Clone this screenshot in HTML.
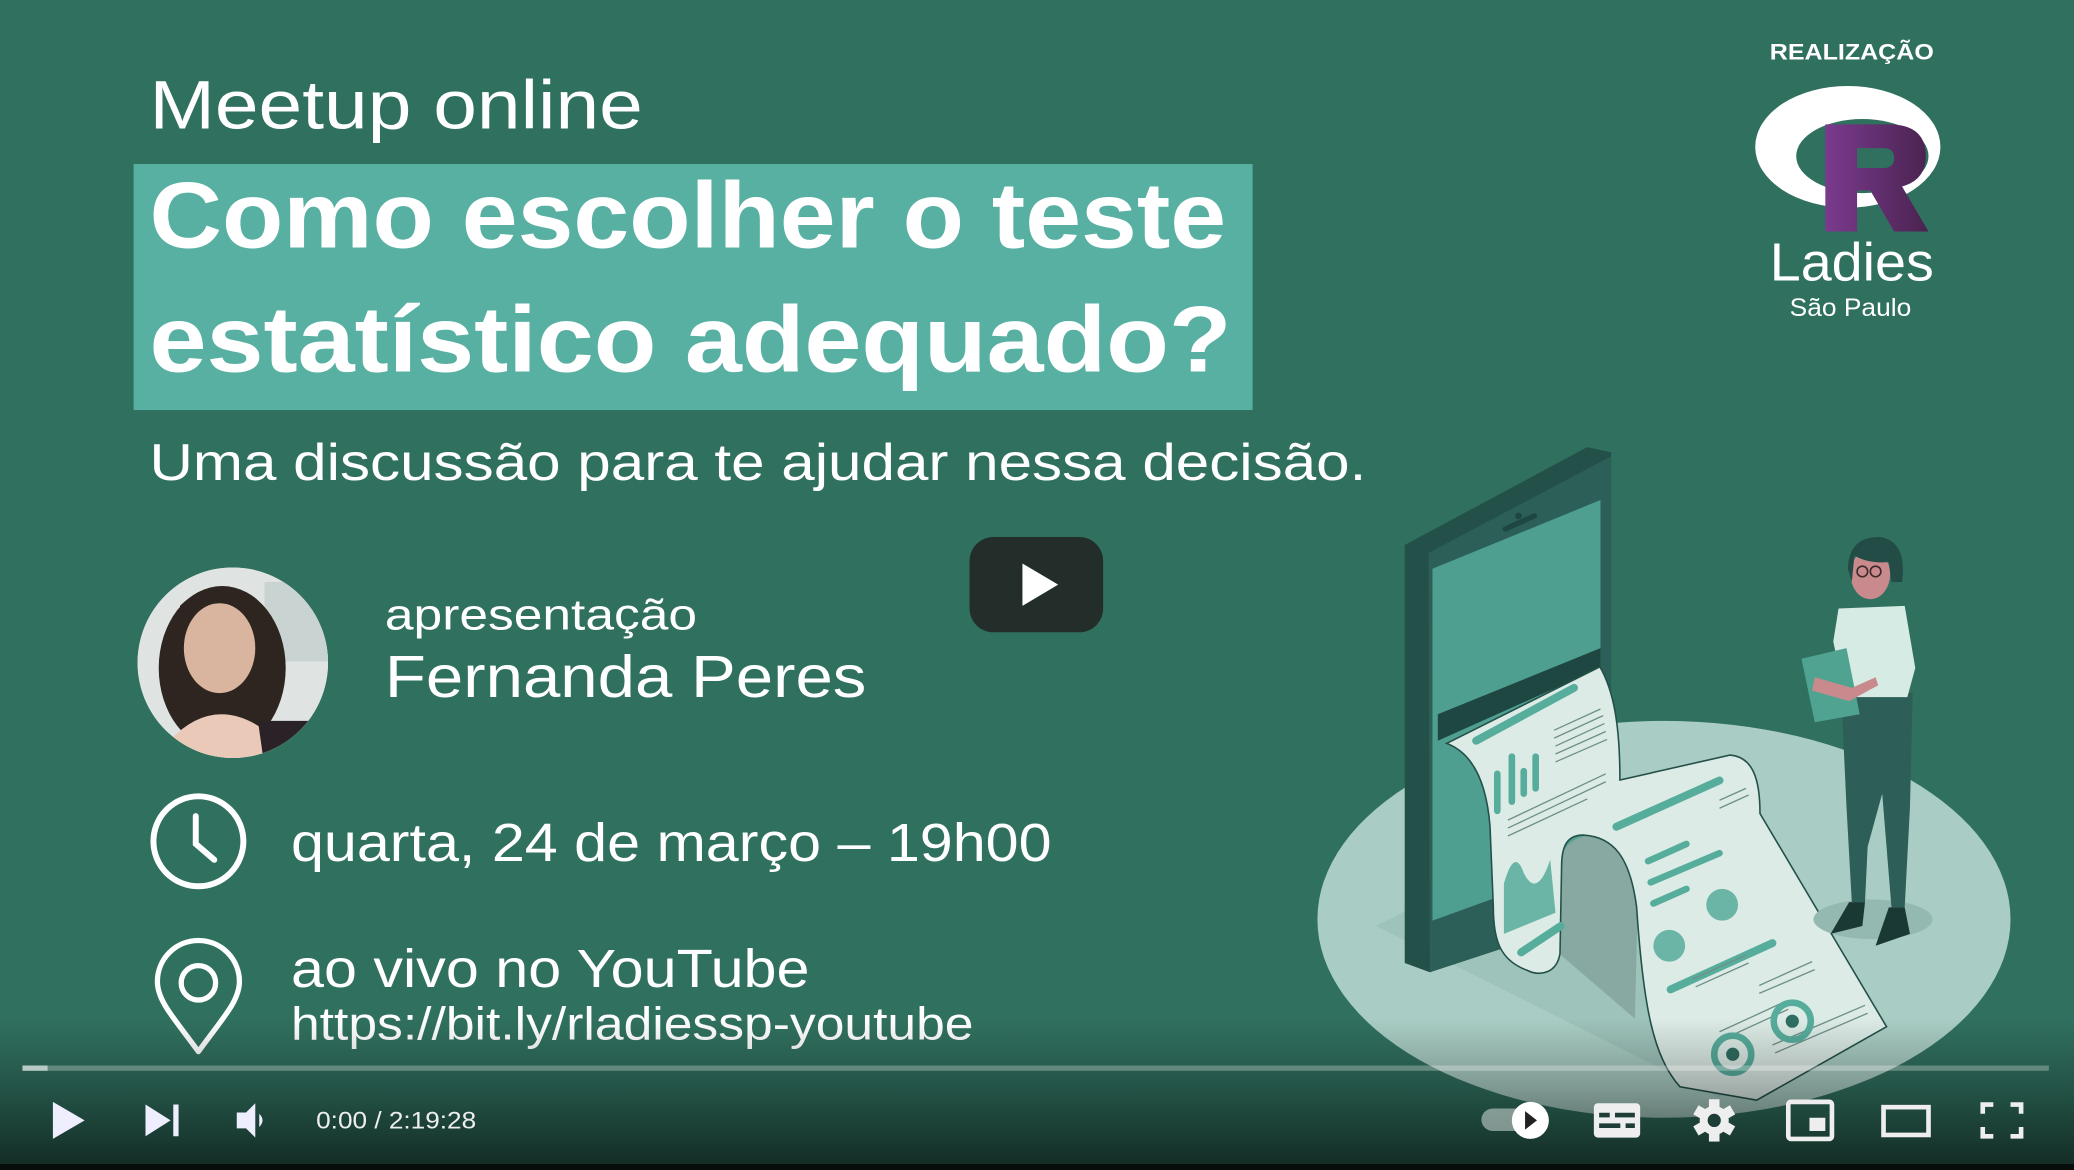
<!DOCTYPE html>
<html><head><meta charset="utf-8"><style>
html,body{margin:0;padding:0;width:2074px;height:1170px;overflow:hidden;background:#30705f}
svg{display:block}
text{font-family:"Liberation Sans",sans-serif;fill:#fff}
</style></head><body>
<svg width="2074" height="1170" viewBox="0 0 1568 884.5" preserveAspectRatio="none" xmlns="http://www.w3.org/2000/svg">
<defs>
<linearGradient id="bot" x1="0" y1="0" x2="0" y2="1">
<stop offset="0" stop-color="#000" stop-opacity="0"/>
<stop offset="0.45" stop-color="#000" stop-opacity="0.25"/>
<stop offset="1" stop-color="#000" stop-opacity="0.62"/>
</linearGradient>
<linearGradient id="rg" x1="0" y1="0" x2="1" y2="0">
<stop offset="0" stop-color="#7a3a8e"/><stop offset="1" stop-color="#4a2350"/>
</linearGradient>
<clipPath id="pc"><circle cx="176" cy="501" r="72"/></clipPath>
</defs>
<rect width="1568" height="884.5" fill="#30705f"/>

<!-- Titles -->
<text x="113" y="97" font-size="52" textLength="373" lengthAdjust="spacingAndGlyphs">Meetup online</text>
<rect x="101" y="124" width="846" height="186" fill="#57b0a1"/>
<text x="113" y="187" font-size="71" font-weight="bold" textLength="814" lengthAdjust="spacingAndGlyphs">Como escolher o teste</text>
<text x="113" y="281" font-size="71" font-weight="bold" textLength="818" lengthAdjust="spacingAndGlyphs">estatístico adequado?</text>
<text x="113" y="363" font-size="39" textLength="920" lengthAdjust="spacingAndGlyphs">Uma discussão para te ajudar nessa decisão.</text>

<!-- Photo -->
<circle cx="176" cy="501" r="72" fill="#e4e8e6"/>
<g clip-path="url(#pc)">
<rect x="104" y="429" width="144" height="144" fill="#dfe4e3"/>
<rect x="200" y="440" width="48" height="60" fill="#c9d3d2"/>
<ellipse cx="168" cy="505" rx="48" ry="62" fill="#2e2520"/>
<ellipse cx="166" cy="490" rx="27" ry="34" fill="#d9b5a0"/>
<path d="M128 560 Q166 520 210 560 L215 580 L120 580Z" fill="#eac9b8"/>
<path d="M195 545 L235 545 L240 580 L200 580Z" fill="#2a2226"/>
<path d="M138 470 Q165 440 192 468 L192 458 Q165 430 136 458Z" fill="#2e2520"/>
</g>
<text x="291" y="476" font-size="33" textLength="236" lengthAdjust="spacingAndGlyphs">apresentação</text>
<text x="291" y="527" font-size="45" textLength="364" lengthAdjust="spacingAndGlyphs">Fernanda Peres</text>

<!-- Clock -->
<circle cx="150" cy="636" r="34" fill="none" stroke="#fff" stroke-width="4.5"/>
<path d="M148 617 L148 638 L162 650" fill="none" stroke="#fff" stroke-width="4.5" stroke-linecap="round"/>
<text x="220" y="651" font-size="41" textLength="575" lengthAdjust="spacingAndGlyphs">quarta, 24 de março – 19h00</text>

<!-- Pin -->
<path d="M150 795 C132 770 119 757 119 742 A31 31 0 0 1 181 742 C181 757 168 770 150 795Z" fill="none" stroke="#fff" stroke-width="4" stroke-linejoin="round"/>
<circle cx="150" cy="743" r="13" fill="none" stroke="#fff" stroke-width="4"/>
<text x="220" y="746" font-size="41" textLength="392" lengthAdjust="spacingAndGlyphs">ao vivo no YouTube</text>
<text x="220" y="786" font-size="35" textLength="516" lengthAdjust="spacingAndGlyphs">https://bit.ly/rladiessp-youtube</text>

<!-- Logo -->
<text x="1338" y="45" font-size="16.5" font-weight="bold" textLength="124" lengthAdjust="spacingAndGlyphs">REALIZAÇÃO</text>
<ellipse cx="1397" cy="111" rx="70" ry="46" fill="#fff"/>
<ellipse cx="1408" cy="118" rx="50" ry="28" fill="#30705f"/>
<path d="M1380 94 L1428 94 Q1456 94 1456 118 Q1456 136 1438 141 L1458 175 L1432 175 L1414 144 L1404 144 L1404 175 L1380 175Z M1404 112 L1404 127 L1424 127 Q1432 127 1432 119.5 Q1432 112 1424 112Z" fill="url(#rg)" fill-rule="evenodd"/>
<text x="1338" y="212" font-size="41" textLength="124" lengthAdjust="spacingAndGlyphs">Ladies</text>
<text x="1353" y="239" font-size="19" textLength="92" lengthAdjust="spacingAndGlyphs">São Paulo</text>

<!-- Illustration -->
<ellipse cx="1258" cy="695" rx="262" ry="150" fill="#a9cdc4"/>
<path d="M1040 700 L1160 640 L1400 760 L1300 830 Z" fill="#9ec3ba"/>
<!-- phone -->
<path d="M1062 412 L1200 338 L1218 342 L1218 690 L1081 735 L1062 728Z" fill="#24504a"/>
<path d="M1080 418 L1218 345 L1218 690 L1081 735Z" fill="#2b5f57"/>
<path d="M1083 430 L1210 378 L1210 650 L1083 696Z" fill="#4f9f91"/>
<path d="M1138 400 L1160 390" stroke="#1e4741" stroke-width="4" stroke-linecap="round"/>
<circle cx="1148" cy="390" r="2.5" fill="#1e4741"/>
<path d="M1087 540 L1210 490 L1210 505 L1087 560Z" fill="#1e4741"/>
<!-- arch shadow -->
<path d="M1180 650 C1182 630 1215 622 1232 648 L1238 690 L1236 770 L1180 722Z" fill="#87a9a1"/>
<!-- paper -->
<path d="M1093.7 562 L1209.6 504.1 C1219.7 521.7 1224.7 546.9 1224.7 589.7 L1307.9 570.8 C1325.5 572.1 1330.6 589.7 1330.6 615 L1426.3 776.2 L1328.1 831.7 L1270.1 821.6 C1249.9 798.9 1242.4 761.1 1237.3 685.5 C1232.3 647.7 1219.7 632.6 1197 631.3 C1184.4 631.3 1180.6 640.1 1180.6 655.3 L1179.4 720.8 C1176.9 735.9 1164.3 738.4 1154.2 733.4 C1134 725.8 1129 710.7 1129 685.5 L1126.5 625 C1124 592.3 1113.9 569.6 1093.7 562Z" fill="#dcebe6" stroke="#24504a" stroke-width="1.2"/>
<g stroke="#57ad9c" stroke-linecap="round">
<path d="M1116 560 L1190 520" stroke-width="6"/>
<path d="M1132 613 L1132 585 M1143 606 L1143 572 M1152 600 L1152 583 M1161 596 L1161 572" stroke-width="5"/>
<path d="M1222 625 L1300 590" stroke-width="6"/>
<path d="M1246 651 L1275 638 M1248 667 L1300 645 M1250 683 L1275 672" stroke-width="5"/>
<path d="M1263 748 L1340 713" stroke-width="6"/>
<path d="M1150 720 L1180 700" stroke-width="6"/>
</g>
<g stroke="#6f8f88" stroke-width="1">
<path d="M1175 552 L1210 536 M1175 558 L1212 541 M1176 564 L1213 547 M1176 570 L1214 553 M1176 576 L1215 559 M1140 620 L1214 585 M1140 626 L1214 591 M1140 632 L1200 604"/>
<path d="M1300 605 L1320 596 M1300 611 L1322 601 M1280 740 L1320 722 M1282 746 L1322 728 M1330 745 L1370 727 M1330 751 L1372 733 M1300 780 L1350 757 M1302 786 L1352 763 M1340 790 L1410 760 M1342 796 L1412 766"/>
</g>
<path d="M1137 668 Q1145 640 1152 660 Q1162 680 1172 650 L1176 690 L1137 706Z" fill="#6ab5a5"/>
<circle cx="1262" cy="715" r="12" fill="#6ab5a5"/>
<circle cx="1302" cy="684" r="12" fill="#6ab5a5"/>
<circle cx="1355" cy="772" r="14" fill="none" stroke="#57ad9c" stroke-width="5"/>
<circle cx="1355" cy="772" r="5" fill="#2f6e62"/>
<circle cx="1310" cy="797" r="14" fill="none" stroke="#57ad9c" stroke-width="5"/>
<circle cx="1310" cy="797" r="5" fill="#2f6e62"/>
<!-- person -->
<ellipse cx="1416" cy="695" rx="45" ry="15" fill="#94b9b0"/>
<path d="M1392 524 L1446 524 L1444 610 L1440 686 L1430 686 L1423 600 L1412 640 L1410 682 L1400 682 L1396 610Z" fill="#2d5e57"/>
<path d="M1398 682 L1410 682 L1408 700 L1384 706 Z" fill="#1a3834"/>
<path d="M1428 686 L1440 686 L1444 706 L1418 715Z" fill="#1a3834"/>
<path d="M1390 460 L1440 458 L1448 505 L1442 527 L1395 527 L1386 485Z" fill="#d6ebe3"/>
<path d="M1362 498 L1396 490 L1406 540 L1372 546Z" fill="#4fa390"/>
<path d="M1372 512 L1400 520 L1418 512 L1420 518 L1398 530 L1370 522Z" fill="#c98a8d"/>
<ellipse cx="1414" cy="434" rx="15" ry="19" fill="#c98a8d"/>
<path d="M1397 430 Q1398 405 1422 406 Q1442 410 1438 440 L1430 440 L1428 425 Q1412 426 1402 420 L1400 440Z" fill="#234c46"/>
<circle cx="1408" cy="432" r="4" fill="none" stroke="#3a2a2a" stroke-width="1.2"/>
<circle cx="1418" cy="432" r="4" fill="none" stroke="#3a2a2a" stroke-width="1.2"/>

<!-- Big play button -->
<rect x="733" y="406" width="101" height="72" rx="18" fill="#212121" fill-opacity="0.85"/>
<path d="M773 426 L800 442 L773 458Z" fill="#fff"/>

<!-- Controls -->
<rect x="0" y="770" width="1568" height="114.5" fill="url(#bot)"/>
<rect x="0" y="880" width="1568" height="4.5" fill="#060d0b"/>
<rect x="17" y="805.5" width="1532" height="4" fill="#fff" fill-opacity="0.28"/>
<rect x="17" y="805.5" width="19" height="4" fill="#fff" fill-opacity="0.55"/>
<path d="M40 833 L64 847 L40 861Z" fill="#eef"/>
<path d="M110 835 L129 847 L110 859Z M131 835 H135 V859 H131Z" fill="#eef"/>
<path d="M179 841 H186 L193 834 V860 L186 853 H179Z M196 842 Q201 847 196 852Z" fill="#eef"/>
<text x="239" y="853" font-size="18.5" textLength="121" lengthAdjust="spacingAndGlyphs" style="fill:#eee">0:00 / 2:19:28</text>
<rect x="1120" y="838" width="40" height="17" rx="8.5" fill="#fff" fill-opacity="0.45"/>
<circle cx="1157" cy="847" r="14" fill="#fff"/>
<path d="M1153 840 L1162 847 L1153 854Z" fill="#222"/>
<rect x="1205" y="834" width="35" height="26" rx="3" fill="#eee"/>
<path d="M1209 843 H1217 M1221 843 H1236 M1209 851 H1225 M1229 851 H1236" stroke="#1d3d36" stroke-width="3.5"/>
<g transform="translate(1296,847)" fill="#eee">
<circle r="11"/>
<g><rect x="-4" y="-16" width="8" height="32"/><rect x="-4" y="-16" width="8" height="32" transform="rotate(60)"/><rect x="-4" y="-16" width="8" height="32" transform="rotate(120)"/></g>
<circle r="5" fill="#1d3d36"/>
</g>
<rect x="1352" y="833" width="33" height="28" rx="2" fill="none" stroke="#eee" stroke-width="3.5"/>
<rect x="1368" y="845" width="12" height="10" fill="#eee"/>
<rect x="1424" y="837" width="34" height="21" fill="none" stroke="#eee" stroke-width="3.5"/>
<path d="M1499 842 V835 H1507 M1520 835 H1528 V842 M1528 852 V859 H1520 M1507 859 H1499 V852" fill="none" stroke="#eee" stroke-width="3.5"/>
</svg>
</body></html>
